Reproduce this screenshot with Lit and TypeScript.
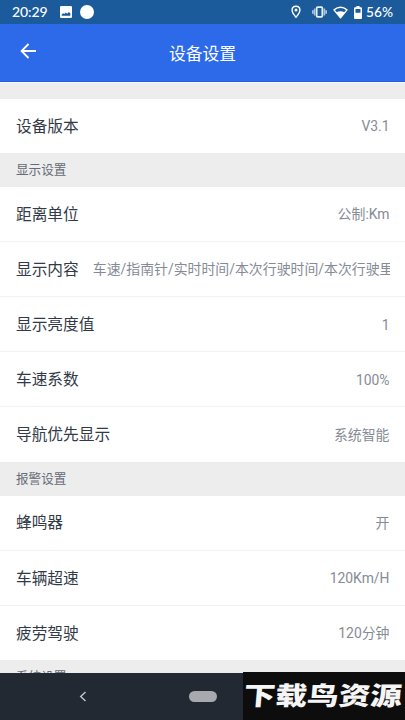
import { LitElement, html, css, svg } from "lit";
import { customElement, property } from "lit/decorators.js";

@customElement("setting-row")
class SettingRow extends LitElement {
  @property() label = "";
  @property() value = "";

  static styles = css`
    :host {
      display: flex;
      align-items: center;
      box-sizing: border-box;
      height: 55.1px;
      padding: 1.6px 15.5px 0 16px;
      background: #fff;
      border-bottom: 1px solid #f2f2f3;
    }
    :host([last]) {
      height: 54.2px;
      border-bottom: 0;
    }
    .label {
      flex: none;
      font-size: 15.7px;
      line-height: 24px;
      color: #323a47;
      margin-right: 14px;
    }
    .value {
      flex: 1;
      min-width: 0;
      overflow: hidden;
      white-space: nowrap;
      text-align: right;
      font-size: 13.9px;
      line-height: 20px;
      padding-bottom: 1px;
      color: #858b95;
    }
  `;

  render() {
    return html`<span class="label">${this.label}</span><span class="value">${this.value}</span>`;
  }
}

type Group = { title: string; rows: [string, string][] };

const groups: Group[] = [
  { title: "", rows: [["设备版本", "V3.1"]] },
  {
    title: "显示设置",
    rows: [
      ["距离单位", "公制:Km"],
      ["显示内容", "车速/指南针/实时时间/本次行驶时间/本次行驶里"],
      ["显示亮度值", "1"],
      ["车速系数", "100%"],
      ["导航优先显示", "系统智能"],
    ],
  },
  {
    title: "报警设置",
    rows: [
      ["蜂鸣器", "开"],
      ["车辆超速", "120Km/H"],
      ["疲劳驾驶", "120分钟"],
    ],
  },
  { title: "系统设置", rows: [] },
];

const pictureIcon = svg`<path fill="#fff" fill-rule="evenodd" d="M1.2 0h9.6q1.2 0 1.2 1.2v9.6q0 1.200-1.200 1.200H1.200Q0 12 0 10.800V1.200Q0 0 1.200 0zM1.700 9.800h8.600V7.300L8.800 5.900 7.300 7.700 5.800 6.600 4.300 8 3.200 7.200 1.700 8.600z"/>`;

@customElement("app-root")
class AppRoot extends LitElement {
  static styles = css`
    :host {
      display: flex;
      flex-direction: column;
      position: relative;
      width: 405px;
      height: 720px;
      overflow: hidden;
      background: #ededed;
      font-family: Roboto, "Noto Sans CJK SC", sans-serif;
    }
    svg {
      display: block;
      flex: none;
    }
    .status {
      flex: none;
      display: flex;
      align-items: center;
      box-sizing: border-box;
      height: 24px;
      padding: 0 12px;
      background: #1c5b9b;
      color: #fff;
      font: 500 13.7px/24px Lato, sans-serif;
    }
    .clock {
      width: 48px;
      font-size: 14px;
      letter-spacing: -0.1px;
    }
    .dot {
      width: 14px;
      height: 14px;
      margin-left: 8px;
      border-radius: 50%;
      background: #fff;
    }
    .right {
      display: flex;
      align-items: center;
      margin-left: auto;
    }
    .pct {
      width: 27px;
      margin-left: 4px;
      white-space: nowrap;
    }
    .bar {
      flex: none;
      display: grid;
      grid-template-columns: 28px 1fr 28px;
      align-items: center;
      box-sizing: border-box;
      height: 58px;
      padding: 0 14px;
      background: #2c6aea;
      border-bottom: 1px solid #2460e0;
      color: #fff;
    }
    .back {
      margin: -4px 0 0 6px;
    }
    .title {
      text-align: center;
      font-size: 16.8px;
    }
    .list {
      flex: 1;
      min-height: 0;
      overflow: hidden;
    }
    .section {
      box-sizing: border-box;
      height: 34.1px;
      padding: 0 16px;
      line-height: 34px;
      font-size: 12.6px;
      color: #656b75;
    }
    .section.blank {
      height: 16.700px;
      border-top: 1px solid #f7f7f7;
    }
    .nav {
      flex: none;
      display: flex;
      align-items: center;
      height: 47px;
      background: #222932;
    }
    .nav svg {
      margin-left: 79px;
    }
    .pill {
      width: 28px;
      height: 11px;
      margin-left: 102px;
      border-radius: 6px;
      background: #a7a9ae;
    }
    .mark {
      position: absolute;
      right: 0;
      bottom: 0;
      width: 162px;
      height: 48px;
      overflow: hidden;
      background: #0d0d0d;
      color: #f5f5f5;
    }
    .mark span {
      display: block;
      width: 130px;
      margin-left: 1px;
      white-space: nowrap;
      font: 900 25.5px/44px "Noto Sans CJK SC", sans-serif;
      transform: scaleX(1.24) skewX(-4deg);
      transform-origin: left center;
    }
  `;

  render() {
    return html`
      <div class="status">
        <span class="clock">20:29</span>
        <svg width="12" height="12" viewBox="0 0 12 12">${pictureIcon}</svg>
        <span class="dot"></span>
        <div class="right">
          <svg width="10" height="14" viewBox="0 0 10 14" fill="none" stroke="#fff" stroke-width="1.4">
            <path d="M5 1.200C2.700 1.200 1.100 2.900 1.100 5 1.100 7.800 5 12.200 5 12.200S8.900 7.800 8.900 5C8.900 2.900 7.300 1.200 5 1.200z" />
            <circle cx="5" cy="5" r="1.500" fill="#fff" stroke="none" />
          </svg>
          <svg width="15" height="12" viewBox="0 0 15 12" fill="none" stroke="#a9c4df" stroke-width="1.700" style="margin-left:11px">
            <rect x="4.700" y="1.200" width="5.600" height="9.600" rx="0.800" stroke="#e6eef6" />
            <path d="M2.700 2.600v6.800M12.300 2.600v6.800M.8 4.300v3.400M14.200 4.300v3.400" />
          </svg>
          <svg width="15" height="13" viewBox="0 0 15 13" style="margin-left:6px">
            <path d="M1 3.900Q7.500-1.300 14 3.900L7.500 11.700z" fill="none" stroke="#fff" stroke-width="1.400" stroke-linejoin="round" />
            <path d="M3.200 6.500Q7.500 3.800 11.800 6.500L7.500 12z" fill="#fff" />
          </svg>
          <svg width="8" height="13" viewBox="0 0 8 13" style="margin-left:6px">
            <path fill="#fff" fill-rule="evenodd" d="M2.400 0h3.200v1.300h1.400q1 0 1 1V12q0 1-1 1H1q-1 0-1-1V2.300q0-1 1-1h1.400zM1.500 2.900V6.800h5V2.900z" />
          </svg>
          <span class="pct">56%</span>
        </div>
      </div>
      <div class="bar">
        <svg class="back" width="17" height="16" viewBox="0 0 17 16" fill="none" stroke="#fff" stroke-width="1.800">
          <path d="M16 8H2M8.500 1L1.600 8l6.900 7" />
        </svg>
        <span class="title">设备设置</span>
      </div>
      <div class="list">
        ${groups.map(
          (g) => html`
            <div class="section ${g.title ? "" : "blank"}">${g.title}</div>
            ${g.rows.map(
              ([l, v], i) =>
                html`<setting-row .label=${l} .value=${v} ?last=${i === g.rows.length - 1}></setting-row>`
            )}
          `
        )}
      </div>
      <div class="nav">
        <svg width="8" height="11" viewBox="0 0 8 11" fill="none" stroke="#c3c5c9" stroke-width="1.400">
          <path d="M6.500 1L1.700 5.500l4.800 4.500" />
        </svg>
        <span class="pill"></span>
      </div>
      <div class="mark"><span>下载鸟资源</span></div>
    `;
  }
}
